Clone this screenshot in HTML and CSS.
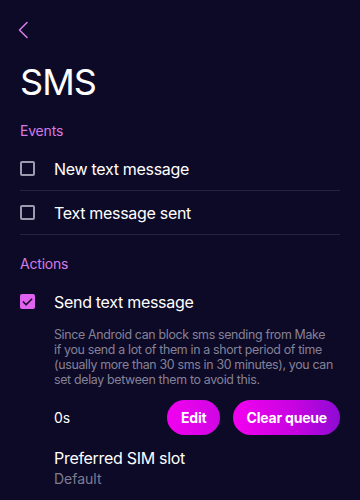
FILE: index.html
```html
<!DOCTYPE html>
<html>
<head>
<meta charset="utf-8">
<link rel="stylesheet" href="styles.css">
</head>
<body>
<div class="screen">
  <div class="topbar">
    <svg class="back" width="12" height="18" viewBox="0 0 12 18"><path d="M10 1.5 L2.5 9 L10 16.5" fill="none" stroke="#d57be6" stroke-width="1.6" stroke-linecap="round" stroke-linejoin="round"/></svg>
  </div>
  <h1 class="title">SMS</h1>

  <div class="section-label">Events</div>
  <div class="row bordered">
    <span class="box"></span>
    <span class="row-text">New text message</span>
  </div>
  <div class="row bordered">
    <span class="box"></span>
    <span class="row-text">Text message sent</span>
  </div>

  <div class="section-label actions">Actions</div>
  <div class="row">
    <span class="box checked"><svg width="12" height="10" viewBox="0 0 12 10"><path d="M1.5 5 L4.5 8 L10.5 2" fill="none" stroke="#1a0a2a" stroke-width="1.8" stroke-linecap="round" stroke-linejoin="round"/></svg></span>
    <span class="row-text">Send text message</span>
  </div>
  <div class="indent">
    <p class="desc">Since Android can block sms sending from Make if you send a lot of them in a short period of time (usually more than 30 sms in 30 minutes), you can set delay between them to avoid this.</p>
    <div class="delay">
      <span class="delay-val">0s</span>
      <div class="buttons">
        <button class="btn btn-edit">Edit</button>
        <button class="btn">Clear queue</button>
      </div>
    </div>
    <div class="sim">
      <div class="sim-title">Preferred SIM slot</div>
      <div class="sim-val">Default</div>
    </div>
  </div>
</div>
</body>
</html>
```

FILE: styles.css
```css
html, body {
  margin: 0;
  padding: 0;
  background: #0d0a27;
}
body {
  font-family: Inter, "Noto Sans", sans-serif;
  color: #ffffff;
  width: 360px;
  height: 500px;
  overflow: hidden;
}
.screen {
  padding: 0 20px;
}
.topbar {
  height: 60px;
  display: flex;
  align-items: flex-start;
  padding-top: 21px;
  box-sizing: border-box;
}
.back {
  margin-left: -3px;
  display: block;
}
.title {
  margin: 0;
  font-size: 36px;
  font-weight: 400;
  line-height: 44px;
  letter-spacing: -0.9px;
}
.section-label {
  margin-top: 17px;
  color: #d57be6;
  font-size: 14px;
  line-height: 20px;
  letter-spacing: -0.2px;
}
.section-label.actions {
  margin-top: 19px;
}
.row {
  display: flex;
  align-items: center;
  height: 43px;
}
.section-label + .row {
  margin-top: 6px;
}
.bordered {
  border-bottom: 1px solid #25223d;
}
.box {
  width: 11px;
  height: 11px;
  border: 2px solid #9d9aae;
  border-radius: 2px;
  flex: none;
  display: flex;
  align-items: center;
  justify-content: center;
}
.box.checked {
  background: #e062f0;
  border-color: #e062f0;
}
.row-text {
  margin-left: 19px;
  font-size: 16px;
  letter-spacing: -0.3px;
}
.indent {
  padding-left: 34px;
}
.desc {
  margin: 4px 0 0;
  padding-right: 7px;
  font-size: 12.4px;
  line-height: 15px;
  letter-spacing: -0.33px;
  color: #858297;
}
.delay {
  display: flex;
  align-items: center;
  justify-content: space-between;
  margin-top: 13px;
  height: 35px;
}
.delay-val {
  font-size: 14px;
}
.buttons {
  display: flex;
  gap: 13px;
}
.btn {
  border: none;
  height: 35px;
  padding: 0 13px;
  border-radius: 18px;
  background: linear-gradient(90deg, #f300ef 0%, #c404e0 60%, #8d0bd3 100%);
  color: #fff;
  font-family: Inter, sans-serif;
  font-weight: 700;
  font-size: 14px;
  letter-spacing: -0.2px;
}
.btn-edit {
  padding: 0 14px;
  background: linear-gradient(90deg, #f100ef 0%, #d006e4 100%);
}
.sim {
  margin-top: 12px;
}
.sim-title {
  font-size: 16px;
  line-height: 22px;
  letter-spacing: -0.3px;
}
.sim-val {
  font-size: 14px;
  line-height: 20px;
  color: #7f7c91;
}
```
